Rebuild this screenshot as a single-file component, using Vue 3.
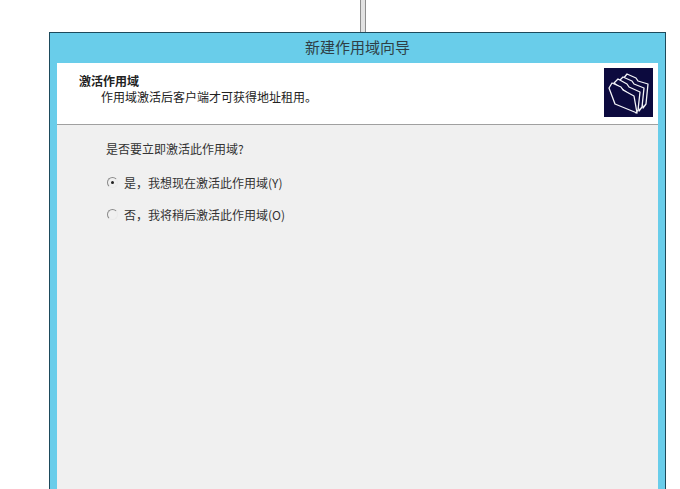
<template>
  <div class="page">
    <div class="connector"></div>
    <div class="wizard">
      <div class="title-bar">新建作用域向导</div>
      <div class="frame">
        <div class="header">
          <div class="header-text">
            <div class="header-title">激活作用域</div>
            <div class="header-desc">作用域激活后客户端才可获得地址租用。</div>
          </div>
          <div class="logo">
            <svg width="49" height="49" viewBox="0 0 49 49">
              <rect width="49" height="49" fill="#0c0a3e" />
              <g fill="#0c0a3e" stroke="#f4f4f8" stroke-width="1.3" stroke-linejoin="round">
                <path d="M19 11 L23 6 L32 10 L34 13 L44 16 L42 36 L39 40 L36 22 Z" />
                <path d="M15 13 L19 9 L28 13 L30 16 L40 20 L38 39 L35 43 L32 25 Z" />
                <path d="M10 15 L14 11 L23 16 L25 19 L36 24 L34 42 L32 45 L29 29 Z" />
                <path d="M5 20 L8 15 L17 19 L19 22 L30 28 L33 45 L11 36 Z" />
              </g>
            </svg>
          </div>
        </div>
        <div class="content">
          <div class="question">是否要立即激活此作用域?</div>
          <label v-for="opt in options" :key="opt.id" class="option">
            <span class="radio" :class="{ checked: opt.id === selected }"></span>
            <span>{{ opt.label }}</span>
          </label>
        </div>
      </div>
    </div>
  </div>
</template>

<script setup>
import { ref } from 'vue';

const selected = ref('yes');

const options = [
  { id: 'yes', label: '是\uFF0C我想现在激活此作用域(Y)' },
  { id: 'no', label: '否\uFF0C我将稍后激活此作用域(O)' },
];
</script>

<style>
html,
body {
  margin: 0;
  background: #fff;
  overflow: hidden;
}
</style>

<style scoped>
.page {
  width: 680px;
  height: 489px;
  background: #fff;
  overflow: hidden;
  font-family: "Noto Sans CJK SC", "Liberation Sans", sans-serif;
}

.connector {
  width: 4px;
  height: 32px;
  margin-left: 360px;
  background: #e2e2e2;
  border-left: 1px solid #8e8e8e;
  border-right: 1px solid #8e8e8e;
}

.wizard {
  width: 617px;
  height: 457px;
  margin-left: 49px;
  box-sizing: border-box;
  display: flex;
  flex-direction: column;
  background: #69cdea;
  border: 1px solid #1d4a5c;
  border-bottom: none;
}

.title-bar {
  height: 30px;
  line-height: 28px;
  text-align: center;
  font-size: 15px;
  color: #2f3f46;
}

.frame {
  flex: 1;
  margin: 0 7px;
  display: flex;
  flex-direction: column;
  background: #f0f0f0;
}

.header {
  height: 62px;
  box-sizing: border-box;
  display: flex;
  justify-content: space-between;
  align-items: flex-start;
  padding: 5px 5px 0 22px;
  background: #fff;
  border-bottom: 1px solid #a0a0a0;
}

.header-text {
  padding-top: 5px;
  font-size: 12px;
  line-height: 16px;
  color: #222;
}

.header-title {
  font-weight: 700;
}

.header-desc {
  padding-left: 22px;
}

.logo {
  width: 49px;
  height: 49px;
}

.logo svg {
  display: block;
}

.content {
  padding: 16px 0 0 49px;
  font-size: 12px;
  color: #333;
}

.question {
  line-height: 16px;
  margin-bottom: 17px;
}

.option {
  display: flex;
  align-items: center;
  gap: 6px;
  height: 16px;
  margin-bottom: 16px;
}

.radio {
  width: 11px;
  height: 11px;
  margin-left: 1px;
  box-sizing: border-box;
  border: 1px solid #8a8a8a;
  border-right-color: #eaeaea;
  border-bottom-color: #eaeaea;
  border-radius: 50%;
  display: flex;
  align-items: center;
  justify-content: center;
}

.radio.checked::after {
  content: "";
  width: 3px;
  height: 3px;
  border-radius: 50%;
  background: #222;
}
</style>
